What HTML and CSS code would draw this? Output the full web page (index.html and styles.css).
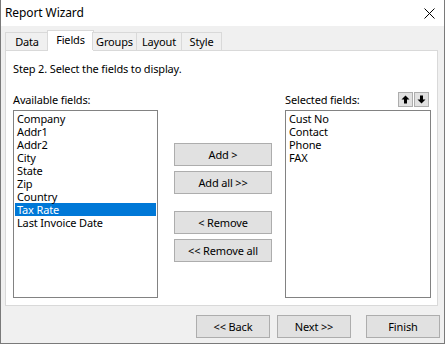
FILE: index.html
```html
<!DOCTYPE html>
<html>
<head>
<meta charset="utf-8">
<link rel="stylesheet" href="styles.css">
</head>
<body>
<div class="window">
  <div class="titlebar">
    <span class="title">Report Wizard</span>
    <svg class="close" width="11" height="11" viewBox="0 0 11 11"><path d="M0.5 0.5 L10.5 10.5 M10.5 0.5 L0.5 10.5" stroke="#000" stroke-width="1" fill="none"/></svg>
  </div>
  <div class="body">
    <div class="tabs">
      <div class="tab t-data">Data</div>
      <div class="tab t-fields selected">Fields</div>
      <div class="tab t-groups">Groups</div>
      <div class="tab t-layout">Layout</div>
      <div class="tab t-style">Style</div>
    </div>
    <div class="panel">
      <div class="step">Step 2. Select the fields to display.</div>
      <div class="columns">
        <div class="col col-left">
          <div class="label-row"><span>Available fields:</span></div>
          <div class="list list-left">
            <div class="item">Company</div>
            <div class="item">Addr1</div>
            <div class="item">Addr2</div>
            <div class="item">City</div>
            <div class="item">State</div>
            <div class="item">Zip</div>
            <div class="item">Country</div>
            <div class="item active">Tax Rate</div>
            <div class="item">Last Invoice Date</div>
          </div>
        </div>
        <div class="middle">
          <div class="btn mid">Add &gt;</div>
          <div class="btn mid">Add all &gt;&gt;</div>
          <div class="btn mid gap">&lt; Remove</div>
          <div class="btn mid">&lt;&lt; Remove all</div>
        </div>
        <div class="col col-right">
          <div class="label-row">
            <span>Selected fields:</span>
            <div class="arrows">
              <div class="arrow-btn"><svg width="9" height="9" viewBox="0 0 9 9"><path d="M4.5 0.5 L8.5 4.5 L6 4.5 L6 8.5 L3 8.5 L3 4.5 L0.5 4.5 Z" fill="#000"/></svg></div>
              <div class="arrow-btn"><svg width="9" height="9" viewBox="0 0 9 9"><path d="M4.5 8.5 L8.5 4.5 L6 4.5 L6 0.5 L3 0.5 L3 4.5 L0.5 4.5 Z" fill="#000"/></svg></div>
            </div>
          </div>
          <div class="list list-right">
            <div class="item">Cust No</div>
            <div class="item">Contact</div>
            <div class="item">Phone</div>
            <div class="item">FAX</div>
          </div>
        </div>
      </div>
    </div>
    <div class="footer">
      <div class="btn foot">&lt;&lt; Back</div>
      <div class="btn foot">Next &gt;&gt;</div>
      <div class="btn foot finish">Finish</div>
    </div>
  </div>
</div>
</body>
</html>
```
FILE: styles.css
```css
* { box-sizing: border-box; }
html, body { margin: 0; padding: 0; }
body {
  font-family: "Noto Sans", "Open Sans", sans-serif;
  font-size: 11px;
  letter-spacing: -0.15px;
  color: #000;
  background: #fff;
}
.window {
  width: 445px;
  height: 344px;
  border: 1px solid #7a7a7a;
  border-top: none;
  display: flex;
  flex-direction: column;
  background: #f0f0f0;
}
.titlebar {
  height: 26px;
  background: #fff;
  display: flex;
  align-items: center;
  justify-content: space-between;
  padding: 0 9px 0 4px;
  flex: none;
}
.title { font-size: 12px; line-height: 16px; letter-spacing: -0.1px; }
.close { display: block; margin-top: 1px; }
.body { flex: 1; display: flex; flex-direction: column; }
.tabs {
  display: flex;
  align-items: flex-start;
  height: 24px;
  padding-left: 4px;
  padding-top: 6px;
  position: relative;
  z-index: 2;
}
.tab {
  height: 18px;
  border: 1px solid #d9d9d9;
  border-bottom: none;
  background: #f0f0f0;
  text-align: center;
  line-height: 18px;
}
.tab + .tab { margin-left: -1px; }
.t-data { width: 44px; }
.t-groups { width: 45px; }
.t-layout { width: 46px; }
.t-style { width: 41px; }
.tab.selected {
  height: 21px;
  margin-top: -2px;
  background: #fff;
  width: 47px;
  margin-left: -2px;
  line-height: 18px;
}
.tab.selected + .tab { margin-left: -2px; }
.panel {
  margin-left: 4px;
  width: 433px;
  height: 256px;
  background: #fff;
  border: 1px solid #d9d9d9;
  padding: 10px 6px 0 7px;
  display: flex;
  flex-direction: column;
  flex: none;
}
.step { line-height: 16px; }
.columns {
  display: flex;
  margin-top: 16px;
}
.col { display: flex; flex-direction: column; }
.col-left { width: 145px; }
.col-right { width: 146px; }
.label-row {
  height: 17px;
  display: flex;
  align-items: flex-start;
  justify-content: space-between;
  line-height: 13px;
}
.arrows { display: flex; gap: 1px; margin-top: -1px; margin-right: 2px; }
.arrow-btn {
  width: 15px;
  height: 15px;
  background: #e1e1e1;
  border: 1px solid #adadad;
  display: flex;
  align-items: center;
  justify-content: center;
}
.arrow-btn svg { display: block; }
.list {
  height: 188px;
  border: 1px solid #828282;
  background: #fff;
  padding: 1px;
}
.item {
  height: 13px;
  line-height: 13px;
  padding-left: 2px;
  white-space: nowrap;
}
.item.active { background: #0078d7; color: #fff; }
.middle {
  width: 98px;
  margin-left: 16px;
  margin-right: 13px;
  display: flex;
  flex-direction: column;
  gap: 5px;
  padding-top: 50px;
}
.btn {
  height: 23px;
  background: #e1e1e1;
  border: 1px solid #adadad;
  display: flex;
  align-items: center;
  justify-content: center;
  line-height: 16px;
}
.btn.gap { margin-top: 12px; }
.footer {
  display: flex;
  justify-content: flex-end;
  padding: 9px 4px 0 0;
  gap: 7px;
}
.btn.foot { width: 74px; }
.btn.finish { margin-left: 8px; }
```
